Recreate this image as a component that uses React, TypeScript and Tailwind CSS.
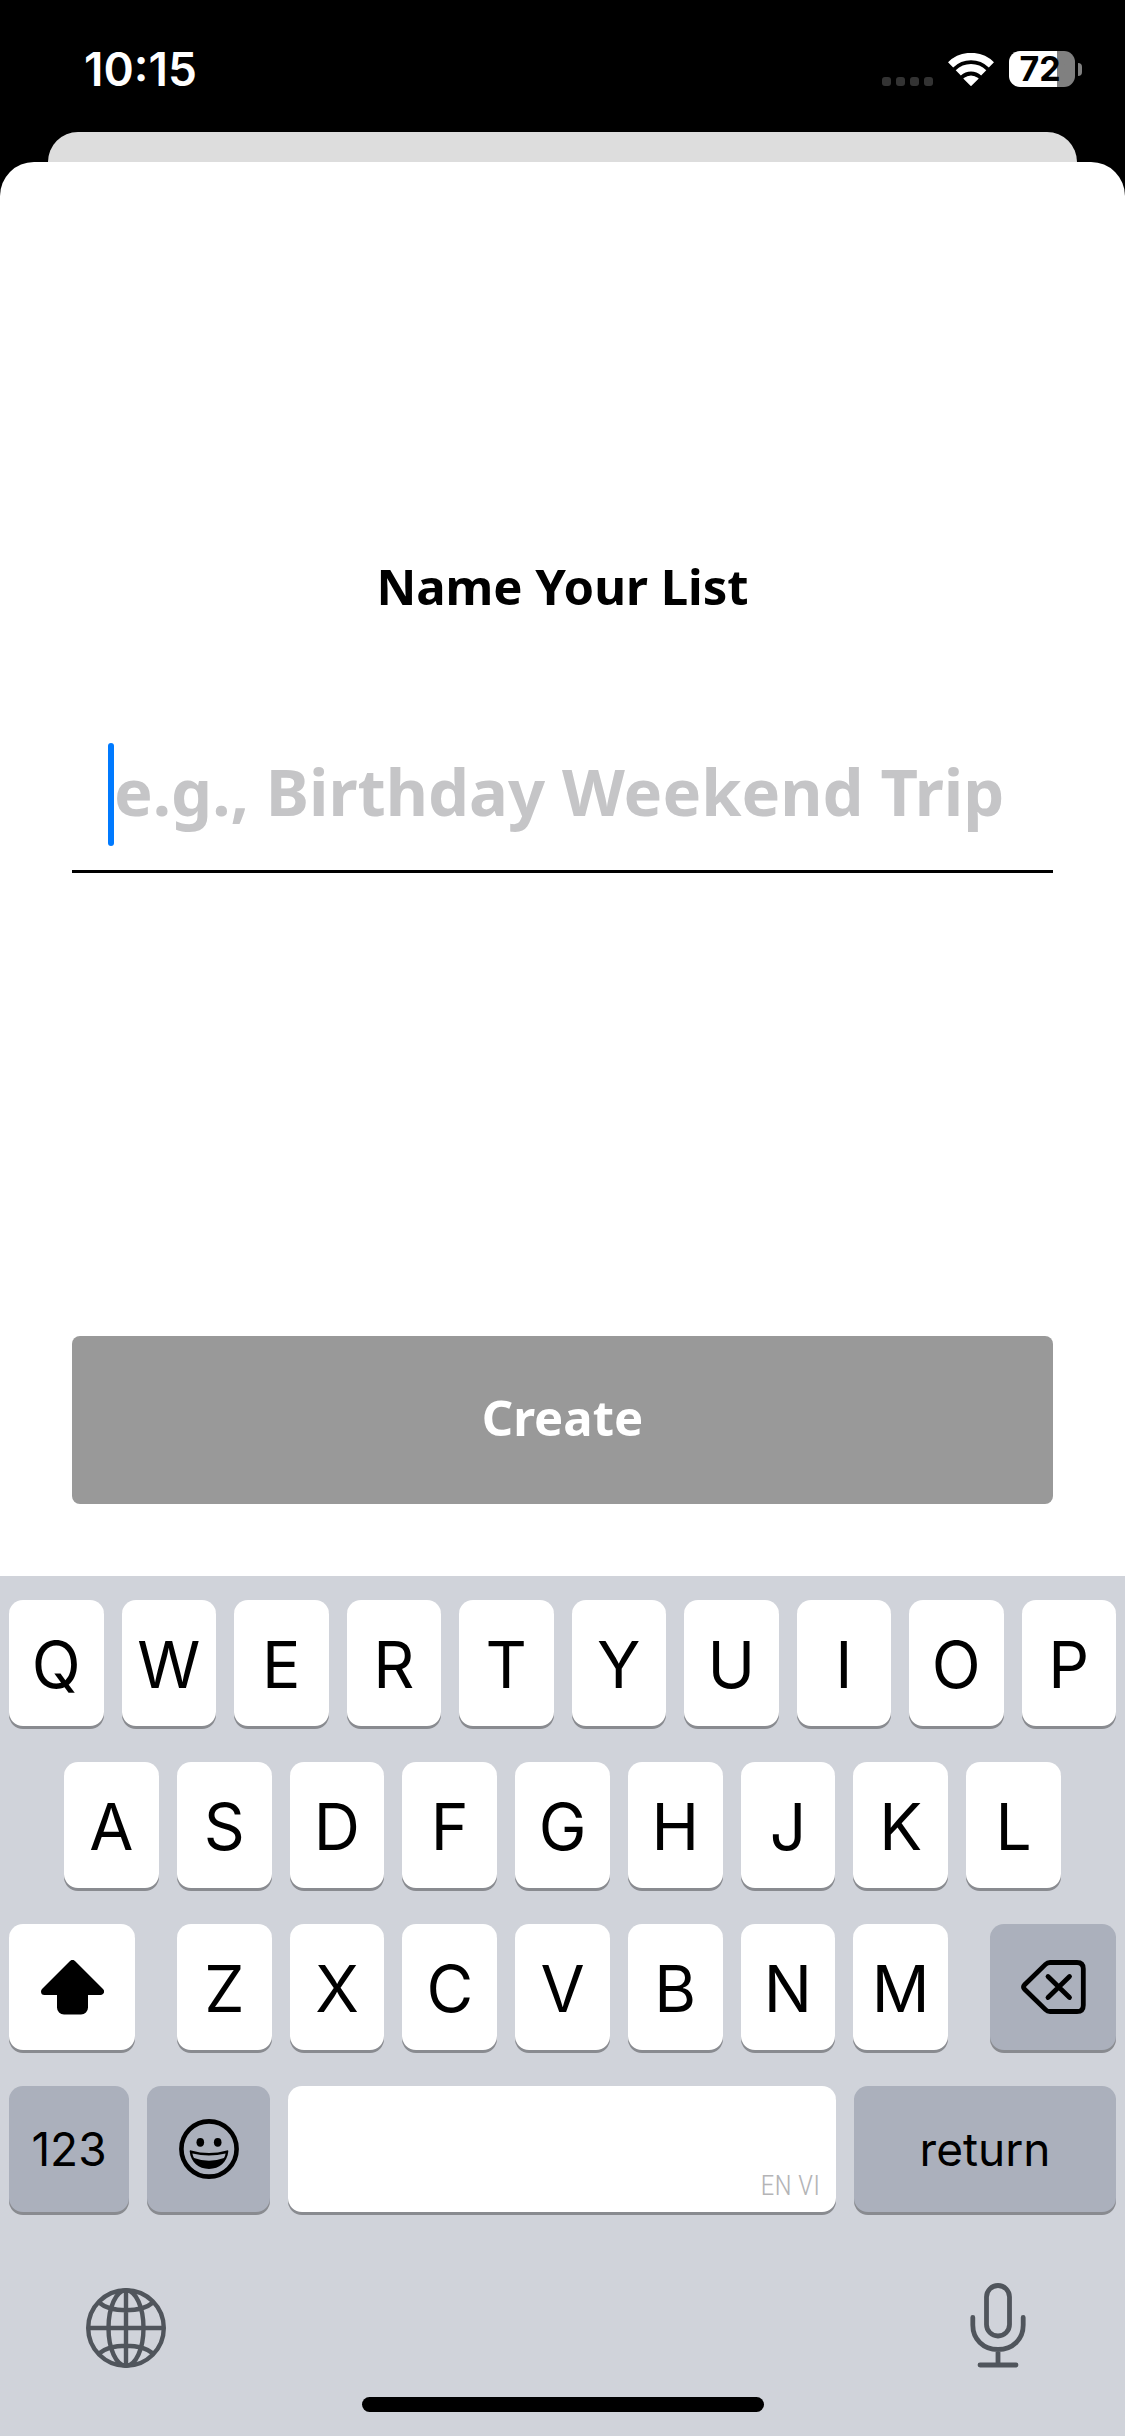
import { useState } from 'react';
import type { ReactNode } from 'react';
import clsx from 'clsx';

const WifiIcon = () => (
  <svg width="46" height="33" viewBox="0 0 46 33" fill="none" stroke="white" strokeWidth="7.4" aria-hidden="true">
    <path d="M2.6 11.8A29.3 29.3 0 0 1 43.4 11.8" />
    <path d="M10.3 19.8A18.3 18.3 0 0 1 35.7 19.8" />
    <path d="M23 32.2L16.2 25.6Q23 20.6 29.8 25.6Z" fill="white" stroke="white" strokeWidth="1.4" strokeLinejoin="round" />
  </svg>
);

const ShiftIcon = () => (
  <svg width="63" height="55" viewBox="0 0 63 55" aria-hidden="true">
    <path
      d="M31.5 3.5L59.5 31.5H43.5V47.5A3.5 3.5 0 0 1 40 51H23A3.5 3.5 0 0 1 19.5 47.5V31.5H3.5Z"
      stroke="black"
      strokeWidth="7"
      strokeLinejoin="round"
    />
  </svg>
);

const DeleteIcon = () => (
  <svg width="65" height="54" viewBox="0 0 65 54" fill="none" stroke="black" strokeWidth="4.8" strokeLinecap="round" strokeLinejoin="round" aria-hidden="true">
    <path d="M29 2.5H56Q62.3 2.5 62.3 8.8V45.2Q62.3 51.5 56 51.5H29Q26.4 51.5 24.5 49.6L3.6 29.3Q1.3 27 3.6 24.7L24.5 4.4Q26.4 2.5 29 2.5Z" />
    <path d="M27 16.5L48.5 37.5M48.5 16.5L27 37.5" />
  </svg>
);

const EmojiIcon = () => (
  <svg width="60" height="60" viewBox="0 0 60 60" aria-hidden="true">
    <circle cx="30" cy="30" r="27.6" fill="none" stroke="black" strokeWidth="4.6" />
    <ellipse cx="21.3" cy="23.3" rx="3.8" ry="4.4" />
    <ellipse cx="38.7" cy="23.3" rx="3.8" ry="4.4" />
    <path d="M10.7 32.6Q10.5 31 12.2 31.4Q30 36.4 47.8 31.4Q49.5 31 49.3 32.6C48 43.5 40.5 50 30 50C19.5 50 12 43.5 10.7 32.6Z" />
    <path d="M13.4 34.4Q30 38.4 46.6 34.4Q46.2 37 45 39Q30 44.6 15 39Q13.8 37 13.4 34.4Z" fill="#abb0bc" />
  </svg>
);

const GlobeIcon = () => (
  <svg width="80" height="80" viewBox="0 0 80 80" fill="none" stroke="#50555c" strokeWidth="4.4" aria-hidden="true">
    <circle cx="40" cy="40" r="37.8" />
    <ellipse cx="40" cy="40" rx="17.5" ry="37.8" />
    <path d="M40 2V78M2 40H78M13 14.5Q22 22.3 40 22.3T67 14.5M13 65.5Q22 57.7 40 57.7T67 65.5" />
  </svg>
);

const MicIcon = () => (
  <svg width="56" height="85" viewBox="0 0 56 85" fill="none" stroke="#50555c" strokeWidth="4.8" strokeLinecap="round" aria-hidden="true">
    <rect x="16.5" y="2.5" width="23" height="50.5" rx="11.5" />
    <path d="M2.8 34.5V42C2.8 56 13 66.5 28 66.5S53.2 56 53.2 42V34.5M28 67V82M10 82H46" />
  </svg>
);

interface KeyProps {
  label: string;
  onPress?: () => void;
  className?: string;
  dark?: boolean;
  children?: ReactNode;
}

const Key = ({ label, onPress, className, dark, children }: KeyProps) => (
  <button
    type="button"
    aria-label={label}
    onClick={onPress}
    className={clsx(
      'flex h-full items-center justify-center rounded-[14px] text-black shadow-[0_3px_0_#898b90]',
      dark ? 'bg-[#abb0bc]' : 'bg-white',
      className,
    )}
  >
    {children}
  </button>
);

interface KeyboardProps {
  onType: (char: string) => void;
  onDelete: () => void;
}

const Keyboard = ({ onType, onDelete }: KeyboardProps) => {
  const letters = (row: string) =>
    row.split('').map((char) => (
      <Key key={char} label={char} onPress={() => onType(char)} className="min-w-0 flex-1 pt-1 text-[64px] leading-none">
        {char}
      </Key>
    ));

  return (
    <div className="bg-[#d0d3da] px-[9px] pt-6 pb-6">
      <div className="flex flex-col gap-9">
        <div className="flex h-[126px] gap-[18px]">{letters('QWERTYUIOP')}</div>
        <div className="flex h-[126px] gap-[18px] px-[55px]">{letters('ASDFGHJKL')}</div>
        <div className="flex h-[126px] gap-[42px]">
          <Key label="Shift" className="w-[126px]">
            <ShiftIcon />
          </Key>
          <div className="flex flex-1 gap-[18px]">{letters('ZXCVBNM')}</div>
          <Key label="Delete" dark onPress={onDelete} className="w-[126px]">
            <DeleteIcon />
          </Key>
        </div>
        <div className="flex h-[126px] gap-[18px]">
          <Key label="Numbers" dark className="w-[120px] text-[46px]">
            123
          </Key>
          <Key label="Emoji" dark className="w-[123px]">
            <EmojiIcon />
          </Key>
          <Key label="Space" onPress={() => onType(' ')} className="flex-1">
            <span className="mt-auto ml-auto pr-4 pb-2 font-['Roboto_Condensed','Open_Sans_Condensed','Roboto',sans-serif] text-[28px] leading-9 font-light text-[#b4b4b6]">
              EN VI
            </span>
          </Key>
          <Key label="Return" dark className="w-[262px] text-[46px]">
            return
          </Key>
        </div>
      </div>

      <div className="mt-[71px] flex items-end justify-between pr-[90px] pl-[77px]">
        <button type="button" aria-label="Next keyboard">
          <GlobeIcon />
        </button>
        <button type="button" aria-label="Dictate">
          <MicIcon />
        </button>
      </div>
      <div className="mx-auto mt-[29px] h-[15px] w-[402px] rounded-full bg-black" />
    </div>
  );
};

const StatusBar = () => (
  <header className="flex h-[132px] items-center justify-between pt-1.5 pr-[43px] pl-[84px] text-white">
    <span className="text-[46px] font-semibold">10:15</span>
    <div className="flex items-center">
      <div className="mt-6 mr-[15px] flex gap-[5px]">
        {[0, 1, 2, 3].map((dot) => (
          <span key={dot} className="size-[9px] rounded-[3px] bg-[#333333]" />
        ))}
      </div>
      <WifiIcon />
      <div className="ml-[15px] flex h-9 w-[66px] items-center justify-center rounded-[11px] bg-linear-to-r from-white from-73% to-[#808080] to-73% pr-1 text-[34px] leading-none font-bold text-black">
        72
      </div>
      <span className="ml-[3px] h-[13px] w-1 rounded-r-full bg-[#808080]" />
    </div>
  </header>
);

export default function App() {
  const [name, setName] = useState('');

  return (
    <div className="flex min-h-screen flex-col bg-black font-['Inter',sans-serif]">
      <StatusBar />

      {/* Page behind the sheet */}
      <div className="mx-12 h-[30px] rounded-t-[30px] bg-[#dddddd]" />

      <main className="flex flex-1 flex-col rounded-t-[34px] bg-white px-[72px] pt-96 pb-18 font-['Noto_Sans',sans-serif] font-bold">
        <label htmlFor="list-name" className="text-center text-[49px] leading-[80px] text-black">
          Name Your List
        </label>

        <div className="mt-[117px] flex items-center border-b-3 border-black pb-6 pl-9">
          <span className="h-[103px] w-[6px] shrink-0 rounded-full bg-[#007aff]" />
          <input
            id="list-name"
            type="text"
            value={name}
            onChange={(e) => setName(e.target.value)}
            placeholder="e.g., Birthday Weekend Trip"
            className="h-[103px] min-w-0 flex-1 bg-transparent pb-2 text-[65px] text-black caret-transparent outline-none placeholder:text-[#c5c5c7]"
          />
        </div>

        <button
          type="button"
          disabled={!name}
          className="mt-auto h-[168px] rounded-lg bg-black pb-1 text-[49px] text-white disabled:bg-[#999999]"
        >
          Create
        </button>
      </main>

      <Keyboard onType={(char) => setName(name + char)} onDelete={() => setName(name.slice(0, -1))} />
    </div>
  );
}
